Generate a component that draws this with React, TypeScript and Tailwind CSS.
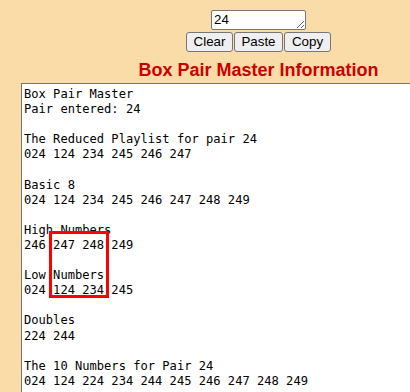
import React from "react";

const lines = [
  "Box Pair Master",
  "Pair entered: 24",
  "",
  "The Reduced Playlist for pair 24",
  "024 124 234 245 246 247",
  "",
  "Basic 8",
  "024 124 234 245 246 247 248 249",
  "",
  "High Numbers",
  "246 247 248 249",
  "",
  "Low Numbers",
  "024 124 234 245",
  "",
  "Doubles",
  "224 244",
  "",
  "The 10 Numbers for Pair 24",
  "024 124 224 234 244 245 246 247 248 249",
];

export default function App() {
  return (
    <div className="w-[410px] h-[392px] overflow-hidden bg-[#f9dca8]">
      <div className="w-[517px] flex flex-col items-center pt-[10px]">
        <textarea
          defaultValue="24"
          className="w-[95px] h-[20px] block border border-[#767676] rounded-[2px] bg-white px-[2px] py-0 text-[13.33px] leading-[17px] text-black overflow-hidden resize"
          style={{ fontFamily: '"Liberation Sans", Arial, sans-serif' }}
        />
        <div className="flex gap-[1px] mt-[2px]" style={{ fontFamily: '"Liberation Sans", Arial, sans-serif' }}>
          <button className="w-[47px] h-[20px] border border-[#767676] rounded-[3px] bg-[#efefef] text-[13.33px] leading-none text-black flex items-center justify-center">
            Clear
          </button>
          <button className="w-[49px] h-[20px] border border-[#767676] rounded-[3px] bg-[#efefef] text-[13.33px] leading-none text-black flex items-center justify-center">
            Paste
          </button>
          <button className="w-[47px] h-[20px] border border-[#767676] rounded-[3px] bg-[#efefef] text-[13.33px] leading-none text-black flex items-center justify-center">
            Copy
          </button>
        </div>
        <h3
          className="mt-[8px] text-[18px] leading-[21px] font-bold text-[#cc0000]"
          style={{ fontFamily: '"Liberation Sans", Arial, sans-serif' }}
        >
          Box Pair Master Information
        </h3>
        <div className="self-start ml-[21px] mt-[2px] w-[475px] h-[400px] relative border border-[#767676] bg-white pl-[2px] pt-[3px]">
          <div
            className="whitespace-pre text-[12.1px] leading-[15.1px] text-black"
            style={{ fontFamily: '"DejaVu Sans Mono", monospace' }}
          >
            {lines.map((l, i) => (
              <div key={i} className="h-[15.1px]">
                {l}
              </div>
            ))}
          </div>
          <div className="absolute left-[27px] top-[147px] w-[60px] h-[67px] border-[3px] border-[#ff0000]" />
        </div>
      </div>
    </div>
  );
}
